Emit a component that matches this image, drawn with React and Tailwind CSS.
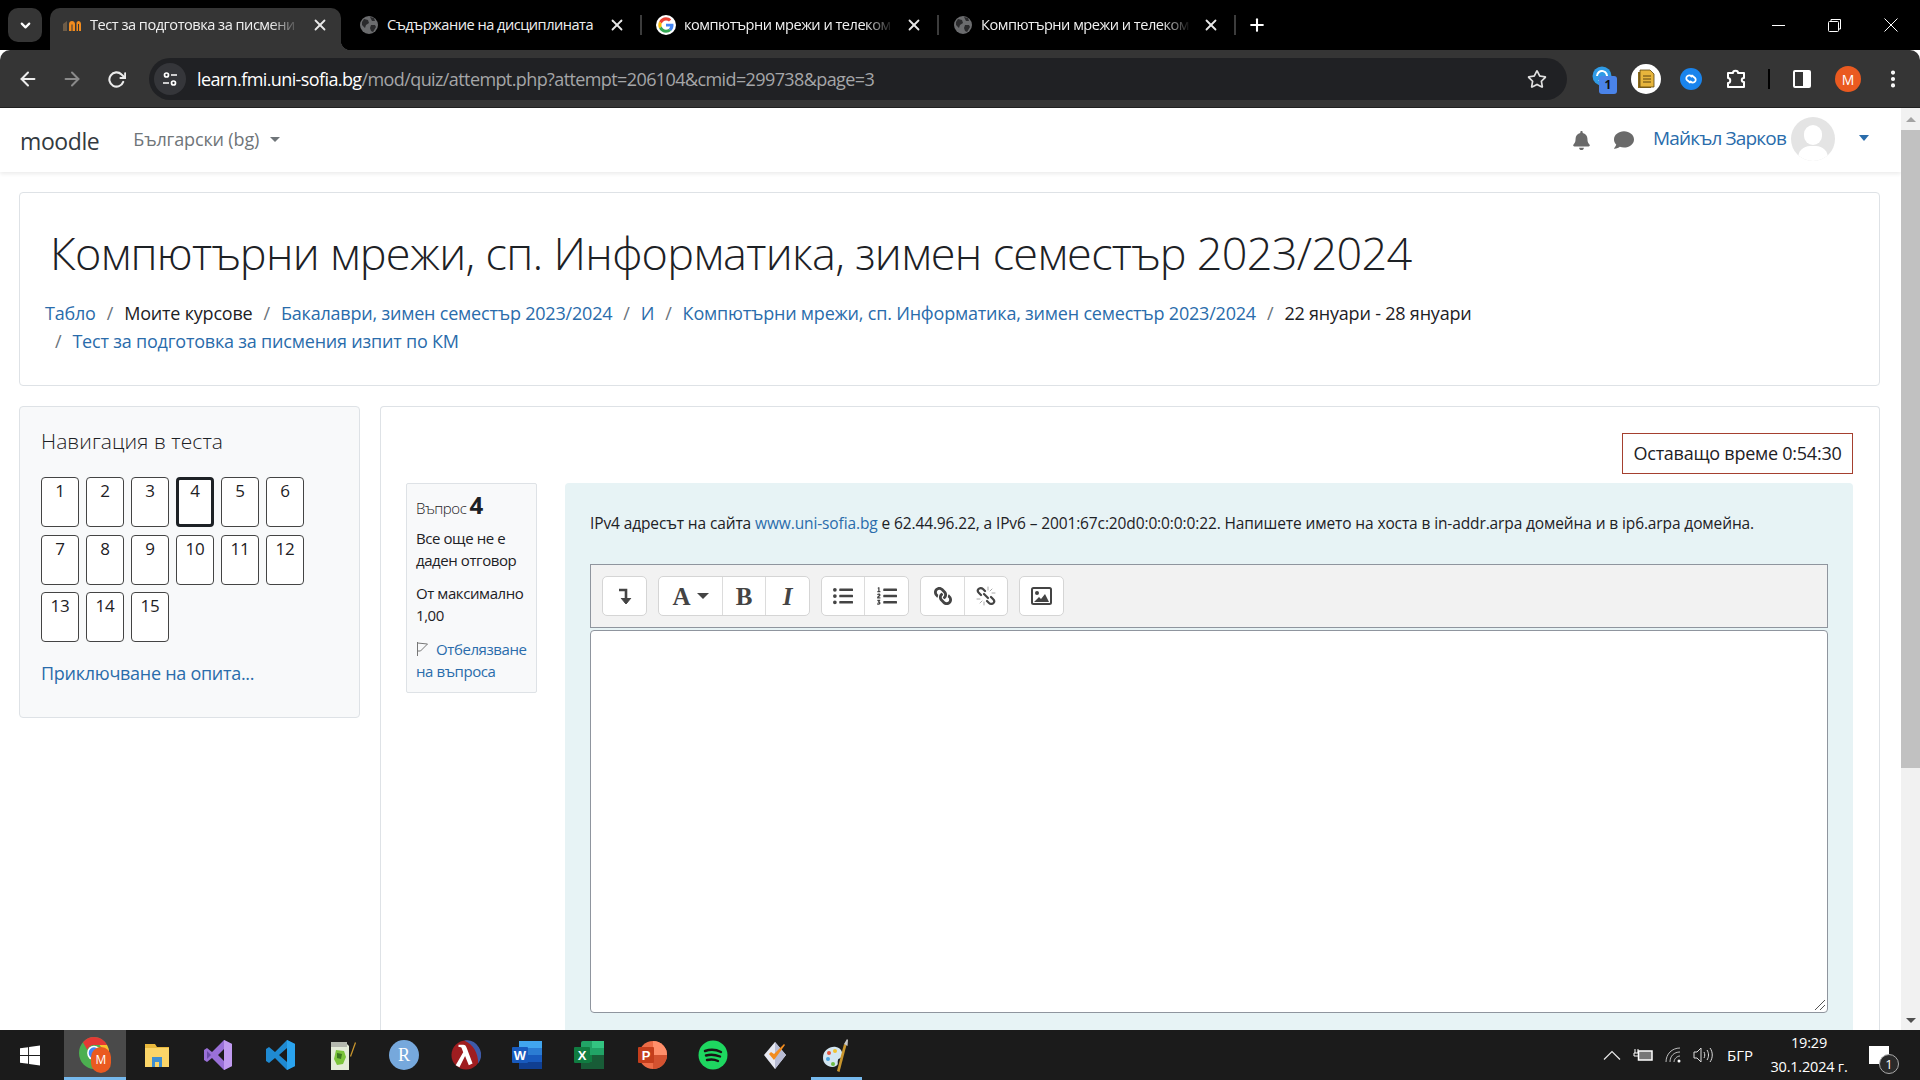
import React from "react";
import { FaListUl, FaListOl, FaLink, FaBell, FaComment, FaRegStar } from "react-icons/fa";
import { FiArrowLeft, FiArrowRight, FiRotateCw, FiX, FiPlus, FiChevronDown, FiMoreVertical } from "react-icons/fi";

const Globe = () => (
  <svg width="18" height="18" viewBox="0 0 18 18" className="shrink-0">
    <circle cx="9" cy="9" r="9" fill="#6b6c6e" />
    <path d="M4 3l4 1 1 3-3 2-1 3-3-3 0-3zM11 9l4 0 1 2-3 5-2-1-1-3z" fill="#2a2a2c" />
    <path d="M10 1l4 1 1 3-3 0z" fill="#2a2a2c" />
  </svg>
);

const GoogleG = () => (
  <svg width="20" height="20" viewBox="0 0 48 48" className="shrink-0">
    <circle cx="24" cy="24" r="24" fill="#fff" />
    <path fill="#ea4335" d="M24 13c3 0 5.300 1 7.200 2.800l5.300-5.300C33.300 7.400 29 5.500 24 5.500 16.800 5.500 10.500 9.700 7.500 15.800l6.200 4.800C15.100 16.200 19.200 13 24 13z" />
    <path fill="#4285f4" d="M42 24.500c0-1.300-.1-2.500-.3-3.700H24v7h10.100c-.4 2.300-1.800 4.300-3.800 5.600l6 4.700C39.800 34.700 42 30 42 24.500z" />
    <path fill="#fbbc05" d="M13.700 27.400c-.4-1.100-.6-2.200-.6-3.400s.2-2.300.6-3.400l-6.200-4.800C6.200 18.300 5.500 21 5.500 24s.7 5.700 2 8.200z" />
    <path fill="#34a853" d="M24 42.500c5 0 9.200-1.600 12.300-4.500l-6-4.700c-1.700 1.100-3.800 1.800-6.300 1.800-4.800 0-8.900-3.200-10.300-7.700l-6.200 4.800c3 6.200 9.300 10.300 16.500 10.300z" />
  </svg>
);

const MoodleFav = () => (
  <svg width="18" height="16" viewBox="0 0 18 16" className="shrink-0">
    <path d="M0 14V7l4-3v10z" fill="#6d5c48" />
    <path d="M6 14V7c0-2 1.500-3 3-3s3 1 3 3v7H9.500V7.500h-1V14z" fill="#f28c1e" />
    <path d="M13.500 14V6c0-1 1-2 2-2s2.500 1 2.500 3v7h-2V7h-1v7z" fill="#f28c1e" />
  </svg>
);

const ChromeLogo = () => (
  <div className="relative w-[32px] h-[36px]">
    <svg width="30" height="32" viewBox="0 0 48 48" preserveAspectRatio="none">
      <circle cx="24" cy="24" r="24" fill="#4caf50" />
      <path d="M24 0a24 24 0 0 1 20.800 12H24a12 12 0 0 0-10.800 7L6.300 8A24 24 0 0 1 24 0z" fill="#e53935" />
      <path d="M44.800 12A24 24 0 0 1 22 48l10-18a12 12 0 0 0 1-18z" fill="#fbc02d" />
      <circle cx="24" cy="24" r="11" fill="#fff" />
      <circle cx="24" cy="24" r="8.500" fill="#4285f4" />
    </svg>
    <span className="absolute right-0 bottom-0 w-[20px] h-[26px] rounded-full bg-[#ea5a20] text-white text-[12px] flex items-center justify-center leading-none">M</span>
  </div>
);

const TaskIcons = [
  <ChromeLogo key="c" />,
  <svg key="f" width="30" height="30" viewBox="0 0 30 30"><path d="M3 4h10l2 3h12v20H3z" fill="#e9b83c" /><rect x="3" y="8" width="24" height="19" fill="#fbd568" /><rect x="10" y="17" width="10" height="10" fill="#3f8fd2" /><rect x="13" y="22" width="4" height="5" fill="#fbd568" /></svg>,
  <svg key="v" width="30" height="32" viewBox="0 0 30 32"><path d="M21 1l8 4v22l-8 4-12-12-5 4-3-2V11l3-2 5 4zM21 10l-6 6 6 6z" fill="#9a70d8" /><path d="M21 1l8 4v22l-8 4z" fill="#c19bf0" /><path d="M4 12v8l4-4z" fill="#6a4ba8" /></svg>,
  <svg key="vs" width="32" height="32" viewBox="0 0 32 32"><path d="M23 1l8 4v22l-8 4-12-12-6 5-3-2V10l3-2 6 5zM23 9l-8 7 8 7z" fill="#1f8ad2" /><path d="M23 1l8 4v22l-8 4z" fill="#2aa3ee" /></svg>,
  <svg key="n" width="30" height="32" viewBox="0 0 30 32"><path d="M4 3h14l4 4v24H4z" fill="#e4ecd8" /><rect x="4" y="3" width="16" height="5" fill="#b4b8ae" /><path d="M9 11l8 1 2 6-3 7-6 1-3-6z" fill="#7cc53b" /><path d="M10 14l5 1-1 5-4-1z" fill="#3d7a1e" /><path d="M23 17L28 3l1 1-5 14z" fill="#c9962d" /></svg>,
  <svg key="r" width="32" height="32" viewBox="0 0 32 32"><circle cx="16" cy="16" r="15" fill="#76a8dc" /><text x="16" y="22" textAnchor="middle" fontFamily="'Liberation Serif',serif" fontSize="18" fill="#fff">R</text></svg>,
  <svg key="l" width="30" height="32" viewBox="0 0 32 32"><circle cx="16" cy="16" r="15.500" fill="#9f1d20" /><path d="M14 .6A15.500 15.500 0 0 1 29 25C29 14 24 5 14 .6z" fill="#3e5ba9" /><path d="M8 5h5c2 0 3 1 4 4l6 16-4 2-4-10-6 12-4-2 8-14-1.500-4C11 7.500 10 7.500 8 7.500z" fill="#fff" /></svg>,
  <svg key="w" width="32" height="32" viewBox="0 0 32 32"><rect x="8" y="2" width="23" height="28" rx="2" fill="#2b7cd3" /><rect x="8" y="2" width="23" height="7" fill="#41a5ee" /><rect x="8" y="16" width="23" height="7" fill="#185abd" /><rect x="8" y="23" width="23" height="7" fill="#103f91" /><rect x="1" y="8" width="16" height="16" rx="1" fill="#185abd" /><text x="9" y="21" textAnchor="middle" fontFamily="'Liberation Sans',sans-serif" fontWeight="700" fontSize="13" fill="#fff">W</text></svg>,
  <svg key="x" width="32" height="32" viewBox="0 0 32 32"><rect x="8" y="2" width="23" height="28" rx="2" fill="#21a366" /><rect x="19" y="2" width="12" height="7" fill="#33c481" /><rect x="8" y="16" width="11" height="7" fill="#107c41" /><rect x="19" y="16" width="12" height="7" fill="#185c37" /><rect x="8" y="23" width="23" height="7" fill="#185c37" /><rect x="1" y="8" width="16" height="16" rx="1" fill="#107c41" /><text x="9" y="21" textAnchor="middle" fontFamily="'Liberation Sans',sans-serif" fontWeight="700" fontSize="13" fill="#fff">X</text></svg>,
  <svg key="p" width="32" height="32" viewBox="0 0 32 32"><circle cx="18" cy="16" r="14" fill="#ed6c47" /><path d="M18 2a14 14 0 0 1 14 14H18z" fill="#ff8f6b" /><path d="M18 16h14a14 14 0 0 1-14 14z" fill="#d35230" /><rect x="3" y="8" width="16" height="16" rx="1" fill="#c43e1c" /><text x="11" y="21" textAnchor="middle" fontFamily="'Liberation Sans',sans-serif" fontWeight="700" fontSize="13" fill="#fff">P</text></svg>,
  <svg key="s" width="30" height="30" viewBox="0 0 30 30"><circle cx="15" cy="15" r="14.500" fill="#1ed760" /><path d="M7 11c6-2 11-1.500 16 1M8 15.500c5-1.500 9-1 14 1M9 20c4-1 8-.5 11 1" stroke="#191414" strokeWidth="2.400" fill="none" strokeLinecap="round" /></svg>,
  <svg key="t" width="30" height="32" viewBox="0 0 30 32"><path d="M15 3l11 13-11 14L4 16z" fill="#e7e9f2" /><path d="M15 3l11 13-11 14z" fill="#b8bcd4" /><path d="M9 15l5 6 11-15-1-1-10 10-3-2z" fill="#f28c1e" /></svg>,
  <svg key="pa" width="30" height="34" viewBox="0 0 30 34"><path d="M2 20c0-8 7-12 13-11 5 1 7 5 6 9-1 3-4 2-4 4-1 3 1 4-2 6-5 3-13-1-13-8z" fill="#d3e6f1" /><circle cx="8" cy="15" r="2" fill="#e5553f" /><circle cx="14" cy="13" r="2" fill="#f2c230" /><circle cx="7" cy="21" r="2" fill="#4aa3df" /><circle cx="12" cy="26" r="2" fill="#6dbb45" /><path d="M16 33l7-27 2.500 1-7 27z" fill="#c9962d" /><path d="M23 6l3-5 1 1-.5 6z" fill="#c9c9c9" /></svg>,
];

const Sep = () => <span className="w-[2px] h-[20px] bg-[#3c3c3c] shrink-0 mx-[2px] mb-[8px]" />;

function Tab({ icon, title, active, fade }) {
  return (
    <div className={`relative flex items-center h-[42px] pb-[8px] w-[291px] shrink-0 ${active ? "bg-[#353535] rounded-t-[10px]" : ""}`}>
      <div className="w-[40px] pl-[4px] flex justify-center shrink-0">{icon}</div>
      <span className={`w-[210px] overflow-hidden whitespace-nowrap text-[14.600px] tracking-[-0.5px] text-[#f0f0f0] ${fade ? "[mask-image:linear-gradient(90deg,#000_86%,transparent)]" : ""}`}>{title}</span>
      <FiX size={18} strokeWidth={2.4} className="ml-[11px] shrink-0 text-[#e8e8e8]" />
      {active && <span className="absolute bottom-0 -right-[10px] w-[10px] h-[10px] bg-[radial-gradient(circle_at_100%_0,transparent_10px,#353535_10.5px)]" />}
    </div>
  );
}

function ChromeBar() {
  return (
    <>
      <div className="h-[50px] bg-black flex items-end shrink-0 pl-[8px]">
        <div className="self-start mt-[8px] w-[34px] h-[34px] bg-[#353535] rounded-[10px] flex items-center justify-center mr-[8px] shrink-0">
          <FiChevronDown size={15} strokeWidth={3.5} className="text-white" />
        </div>
        <Tab active fade icon={<MoodleFav />} title="Тест за подготовка за писмени" />
        <div className="flex items-center h-[42px] ml-[6px]">
          <Tab icon={<Globe />} title="Съдържание на дисциплината" />
          <Sep />
          <Tab fade icon={<GoogleG />} title="компютърни мрежи и телеком" />
          <Sep />
          <Tab fade icon={<Globe />} title="Компютърни мрежи и телеком" />
          <Sep />
          <FiPlus size={20} strokeWidth={2.5} className="ml-[9px] mb-[8px] text-white shrink-0" />
        </div>
        <div className="ml-auto self-start h-[50px] flex items-center text-white">
          <div className="w-[56px] flex justify-center"><span className="w-[13px] h-[1px] bg-white" /></div>
          <div className="w-[56px] flex justify-center">
            <svg width="13" height="13" viewBox="0 0 13 13" fill="none" stroke="#fff"><rect x=".5" y="2.500" width="10" height="10" rx="1" /><path d="M3 2.500V.5h9.500V10h-2" /></svg>
          </div>
          <div className="w-[58px] flex justify-center">
            <svg width="14" height="14" viewBox="0 0 14 14" stroke="#fff"><path d="M.5.5l13 13M13.500.5l-13 13" /></svg>
          </div>
        </div>
      </div>
      <div className="h-[58px] pt-[1px] bg-[#353535] rounded-t-[10px] flex items-center shrink-0 border-b border-[#202020]">
        <FiArrowLeft size={22} strokeWidth={2.2} className="ml-[17px] text-[#ececec]" />
        <FiArrowRight size={22} strokeWidth={2.2} className="ml-[22px] text-[#8a8a8a]" />
        <FiRotateCw size={19} strokeWidth={2.6} className="ml-[24px] text-[#ececec]" />
        <div className="ml-[23px] h-[42px] w-[1418px] bg-[#202124] rounded-[21px] flex items-center pl-[5px] pr-[20px] shrink-0">
          <div className="w-[32px] h-[32px] rounded-full bg-[#35363a] flex items-center justify-center">
            <svg width="14" height="14" viewBox="0 0 14 14" fill="none" stroke="#fff" strokeWidth="1.700"><circle cx="3.500" cy="3" r="2" /><path d="M8 3h6M0 11h6" /><circle cx="10.500" cy="11" r="2" /></svg>
          </div>
          <span className="ml-[11px] text-[18px] tracking-[-0.6px] whitespace-nowrap text-white">learn.fmi.uni-sofia.bg<span className="text-[#a5a6a8]">/mod/quiz/attempt.php?attempt=206104&amp;cmid=299738&amp;page=3</span></span>
          <FaRegStar size={20} className="ml-auto text-[#e0e0e0]" />
        </div>
        <div className="ml-[24px] w-[30px] h-[30px] relative shrink-0">
          <svg width="20" height="20" viewBox="0 0 20 20" className="absolute left-[1px] top-[2px]"><circle cx="10" cy="10" r="9.500" fill="#2f9be6" /><path d="M5 10a5 5 0 1 1 2 4" stroke="#fff" strokeWidth="2" fill="none" /></svg>
          <span className="absolute left-[8px] top-[12px] w-[18px] h-[18px] bg-[#4a83e8] rounded-[3px] text-[12px] text-[#111] font-bold flex items-center justify-center">1</span>
        </div>
        <div className="ml-[10px] w-[30px] h-[30px] rounded-full bg-white flex items-center justify-center shrink-0">
          <svg width="18" height="20" viewBox="0 0 18 20"><rect x="1" y="3" width="13" height="16" fill="#8a6a1a" /><path d="M3 1h10l4 4v13H3z" fill="#e7b53c" stroke="#5c4510" strokeWidth=".8" /><path d="M6 7h8M6 10h8M6 13h8" stroke="#5c4510" /></svg>
        </div>
        <div className="ml-[19px] w-[22px] h-[22px] rounded-full bg-[#1a84ec] flex items-center justify-center shrink-0">
          <svg width="14" height="14" viewBox="0 0 14 14" fill="none" stroke="#fff" strokeWidth="1.800" strokeLinecap="round"><path d="M6 10.500L3 8c-1-1-1-3 .5-4s3-.5 4 .5M8 3.500L11 6c1 1 1 3-.5 4s-3 .5-4-.5" /></svg>
        </div>
        <svg width="22" height="22" viewBox="0 0 22 22" fill="none" stroke="#fff" strokeWidth="2" strokeLinejoin="round" className="ml-[23px] shrink-0"><path d="M3 5h5c0-3 5-3 5 0h6v5c-3 0-3 4 0 4v5H3v-4c3 0 3-5 0-5z" /></svg>
        <span className="ml-[21px] w-[2px] h-[20px] bg-black shrink-0" />
        <div className="ml-[23px] w-[18px] h-[18px] rounded-[2px] bg-white flex justify-start shrink-0 border-2 border-white"><span className="w-[8px] h-full bg-[#353535]" /></div>
        <div className="ml-[24px] w-[26px] h-[26px] rounded-full bg-[#ea5a20] text-white text-[14px] flex items-center justify-center shrink-0">M</div>
        <FiMoreVertical size={22} strokeWidth={2.5} className="ml-[21px] text-white shrink-0" />
      </div>
    </>
  );
}

const BLUE = "text-[#2a6cab]";
const Slash = ({ cls = "mx-[11px]" }) => <span className={`${cls} text-[#6a737b]`}>/</span>;

function Navbar() {
  return (
    <div className="h-[64px] bg-white flex items-center shrink-0 shadow-[0_2px_4px_rgba(0,0,0,0.08)] relative pl-[20px] text-[#1d2125]">
      <span className="text-[23px] tracking-[-0.4px] text-[#333a40] leading-none mt-[2px]">moodle</span>
      <span className="ml-[34px] text-[18px] tracking-[-0.15px] text-[#6f7579] -mt-[1px]">Български (bg)</span>
      <span className="ml-[11px] -mt-[2px] border-x-[5px] border-x-transparent border-t-[5px] border-t-[#6f7579]" />
      <FaBell size={19} className="ml-auto text-[#6a6a6a]" />
      <FaComment size={20} className="ml-[23px] text-[#6a6a6a]" />
      <span className={`ml-[19px] text-[19px] tracking-[-0.83px] ${BLUE} -mt-[4px]`}>Майкъл Зарков</span>
      <div className="ml-[5px] w-[44px] h-[44px] rounded-full bg-[#e4e4e4] overflow-hidden relative shrink-0 -mt-[2px]">
        <span className="absolute left-[13px] top-[8px] w-[18px] h-[20px] rounded-full bg-white" />
        <span className="absolute left-[7px] top-[29px] w-[30px] h-[24px] rounded-full bg-white" />
      </div>
      <span className="ml-[24px] mr-[32px] -mt-[5px] border-x-[5px] border-x-transparent border-t-[6px] border-t-[#2a6cab]" />
    </div>
  );
}

function Header() {
  return (
    <div className="mt-[20px] mx-[19px] w-[1861px] h-[194px] border border-[#dee2e6] rounded-[4px] bg-white pl-[25px] pt-[30px] shrink-0">
      <h1 className="ml-[5px] text-[45px] font-light leading-[60px] tracking-[-0.68px] text-[#1d2125] whitespace-nowrap">Компютърни мрежи, сп. Информатика, зимен семестър 2023/2024</h1>
      <div className="mt-[16px] text-[18px] leading-[28px] tracking-[-0.2px] whitespace-nowrap">
        <div>
          <span className={BLUE}>Табло</span><Slash />
          <span className="text-[#1d2125]">Моите курсове</span><Slash />
          <span className={BLUE}>Бакалаври, зимен семестър 2023/2024</span><Slash />
          <span className={BLUE}>И</span><Slash />
          <span className={BLUE}>Компютърни мрежи, сп. Информатика, зимен семестър 2023/2024</span><Slash />
          <span className="text-[#1d2125]">22 януари - 28 януари</span>
        </div>
        <div className="pl-[10px]">
          <Slash cls="mr-[11px]" /><span className={BLUE}>Тест за подготовка за писмения изпит по КМ</span>
        </div>
      </div>
    </div>
  );
}

function QuizNav() {
  const nums = Array.from({ length: 15 }, (_, i) => i + 1);
  return (
    <div className="w-[341px] h-[312px] bg-[#f8f9fa] border border-[#dee2e6] rounded-[4px] pl-[21px] pt-[18px] shrink-0">
      <div className="text-[21px] font-light leading-[32px] tracking-[0.05px] text-[#1d2125]">Навигация в теста</div>
      <div className="mt-[20px] grid grid-cols-[repeat(6,38px)] gap-x-[7px] gap-y-[7.5px]">
        {nums.map((n) => (
          <div key={n} className={`h-[50px] rounded-[4px] bg-white text-center text-[17px] tracking-[-0.3px] text-[#1d2125] ${n === 4 ? "border-[3px] border-[#1d2125] leading-[22px]" : "border border-[#444] leading-[26px]"}`}>{n}</div>
        ))}
      </div>
      <div className={`mt-[19px] text-[18px] leading-[24px] tracking-[-0.28px] ${BLUE}`}>Приключване на опита...</div>
    </div>
  );
}

function InfoBox() {
  return (
    <div className="w-[131px] h-[210px] bg-[#f8f9fa] border border-[#dee2e6] rounded-[2px] pl-[9px] pt-[10px] shrink-0 text-[15px] leading-[22px] tracking-[-0.42px] text-[#1d2125]">
      <div className="h-[28px] flex items-baseline">
        <span className="font-light">Въпрос</span><span className="ml-[3px] text-[24px] font-bold">4</span>
      </div>
      <div className="mt-[5px]">Все още не е<br />даден отговор</div>
      <div className="mt-[11px]">От максимално<br />1,00</div>
      <div className={`mt-[12px] ${BLUE}`}>
        <svg width="12" height="14" viewBox="0 0 12 14" className="inline mr-[8px] -mt-[3px]" fill="none" stroke="#777"><path d="M1.500 0v14M1.500 1l10 1-7 7-3 0" /></svg>
        Отбелязване<br />на въпроса
      </div>
    </div>
  );
}

const Btn = ({ w, children, last }) => (
  <div className={`h-full flex items-center justify-center text-[#444] ${last ? "" : "border-r border-[#dcdcdc]"}`} style={{ width: w }}>{children}</div>
);
const Group = ({ children }) => (
  <div className="h-[40px] flex bg-white border border-[#d5d5d5] rounded-[5px]">{children}</div>
);

function Editor() {
  const Letter = ({ c, i }) => <span className={`font-['Liberation_Serif',serif] font-bold text-[25px] leading-none text-[#444] ${i ? "italic" : ""}`}>{c}</span>;
  return (
    <div className="mt-[30px] mx-[25px] shrink-0">
      <div className="h-[64px] bg-[#f2f2f2] border border-[#8f959e] pl-[11px] flex items-center gap-[11px]">
        <Group>
          <Btn w={43} last>
            <svg width="14" height="17" viewBox="0 0 14 17" fill="none" stroke="#444" strokeWidth="2.600"><path d="M1 2h7v13" /><path d="M3 10l5 6 5-6" fill="#444" strokeWidth="1" /></svg>
          </Btn>
        </Group>
        <Group>
          <Btn w={64}><Letter c="A" /><span className="ml-[6px] border-x-[6px] border-x-transparent border-t-[6px] border-t-[#444]" /></Btn>
          <Btn w={43}><Letter c="B" /></Btn>
          <Btn w={43} last><Letter c="I" i /></Btn>
        </Group>
        <Group>
          <Btn w={43}><FaListUl size={20} /></Btn>
          <Btn w={43} last><FaListOl size={20} /></Btn>
        </Group>
        <Group>
          <Btn w={44}><FaLink size={18} className="-scale-x-100" /></Btn>
          <Btn w={42} last>
            <svg width="20" height="20" viewBox="0 0 20 20" fill="none" stroke="#444" strokeWidth="2.200" strokeLinecap="round"><path d="M9 5L7 3C5.500 1.500 3.500 2 2.500 3S1.500 5.500 3 7l2 2" /><path d="M11 15l2 2c1.500 1.500 3.500 1 4.500 0s1-2.500-.5-4l-2-2" /><path d="M8 8l4 4" /><path d="M12 1v3M16 3l-2 2M19 7h-3M1 13h3M4 17l2-2M8 19v-3" stroke="#aaa" strokeWidth="1" /></svg>
          </Btn>
        </Group>
        <Group>
          <Btn w={43} last>
            <svg width="21" height="18" viewBox="0 0 21 18"><rect x="1" y="1" width="19" height="16" rx="1.500" fill="#fff" stroke="#444" strokeWidth="2" /><circle cx="6" cy="6" r="2" fill="#444" /><path d="M3 15l5-5 2 2 4-5 4 8z" fill="#444" /></svg>
          </Btn>
        </Group>
      </div>
      <div className="mt-[2px] h-[383px] bg-white border border-[#8f959e] rounded-[4px] relative">
        <svg width="12" height="12" viewBox="0 0 12 12" className="absolute right-[1px] bottom-[1px]" stroke="#555" fill="none"><path d="M1 11L11 1M6 11l5-5" /></svg>
      </div>
    </div>
  );
}

function Question() {
  return (
    <div className="flex-1 min-h-0 bg-white border-x border-t border-[#dee2e6] rounded-t-[4px] w-[1500px]">
      <div className="flex justify-end pr-[26px] pt-[26px]">
        <div className="h-[41px] w-[231px] border border-[#a5402f] flex items-center justify-center text-[18px] tracking-[-0.25px] text-[#1d2125]">Оставащо време 0:54:30</div>
      </div>
      <div className="flex pl-[25px] pr-[26px] mt-[9px]">
        <InfoBox />
        <div className="ml-[28px] w-[1288px] h-[560px] bg-[#e7f3f5] rounded-t-[4px] shrink-0">
          <div className="pt-[29px] pl-[25px] text-[15.500px] leading-[22px] tracking-[-0.12px] text-[#1d2125] whitespace-nowrap">
            IPv4 адресът на сайта <span className={BLUE}>www.uni-sofia.bg</span> е 62.44.96.22, а IPv6 – 2001:67c:20d0:0:0:0:0:22. Напишете името на хоста в in-addr.arpa домейна и в ip6.arpa домейна.
          </div>
          <Editor />
        </div>
      </div>
    </div>
  );
}

function Scrollbar() {
  return (
    <div className="w-[19px] bg-[#f1f1f1] shrink-0 flex flex-col items-center">
      <span className="mt-[9px] border-x-[5px] border-x-transparent border-b-[5px] border-b-[#a3a3a3]" />
      <div className="mt-[8px] w-full h-[638px] bg-[#c1c1c1]" />
      <span className="mt-auto mb-[7px] border-x-[5px] border-x-transparent border-t-[5px] border-t-[#505050]" />
    </div>
  );
}

function Taskbar() {
  return (
    <div className="h-[50px] bg-[#1b1b1b] flex items-center shrink-0 text-white">
      <div className="w-[64px] pr-[4px] flex justify-center">
        <svg width="20" height="21" viewBox="0 0 21 21" fill="#fff"><path d="M0 3l8.500-1.200V10H0zM9.500 1.600L21 0v10H9.500zM0 11h8.500v8.200L0 18zM9.500 11H21v10L9.500 19.400z" /></svg>
      </div>
      {TaskIcons.map((ic, i) => (
        <div key={i} className={`w-[61.800px] h-[50px] relative flex items-center justify-center shrink-0 ${i === 0 ? "bg-[#4a4a4a]" : ""}`}>
          {ic}
          {i === 0 && <span className="absolute left-0 right-0 bottom-0 h-[3px] bg-[#76b9ed]" />}
          {i === 12 && <span className="absolute left-[5px] right-[5px] bottom-0 h-[3px] bg-[#76b9ed]" />}
        </div>
      ))}
      <div className="ml-auto flex items-center">
        <svg width="18" height="10" viewBox="0 0 18 10" fill="none" stroke="#e8e8e8" strokeWidth="1.200"><path d="M1 9.500L9 1.500l8 8" /></svg>
        <svg width="22" height="14" viewBox="0 0 22 14" className="ml-[10px]" fill="none" stroke="#fff"><path d="M4 1v4M7 1v4M3 5h5v3H3z" /><rect x="7.500" y="3" width="13.500" height="9" fill="#777" strokeWidth="1.500" /></svg>
        <svg width="17" height="16" viewBox="0 0 17 16" className="ml-[12px]" fill="none" stroke="#bdbdbd"><path d="M1 15C1 7 7 1 15 1M5 15C5 9 9 5 15 5M9 15c0-3 3-6 6-6" /><circle cx="14" cy="14" r="1.500" fill="#fff" stroke="none" /></svg>
        <svg width="20" height="16" viewBox="0 0 20 16" className="ml-[11px]" fill="none" stroke="#dcdcdc"><path d="M1 5h3l4-4v14l-4-4H1zM11 5c1 2 1 4 0 6M14 3c2 3 2 7 0 10M17 1c3 4 3 10 0 14" /></svg>
        <span className="ml-[14px] text-[15px]">БГР</span>
        <div className="ml-[17px] w-[78px] text-center text-[14.500px] leading-[24px] whitespace-nowrap tracking-[-0.2px] flex flex-col items-center">
          <span>19:29</span><span>30.1.2024 г.</span>
        </div>
        <div className="ml-[21px] mr-[31px] relative w-[20px] h-[18px] bg-white">
          <span className="absolute -right-[10px] top-[8px] w-[20px] h-[20px] rounded-full bg-[#2a2a2a] border border-[#aaa] text-[13px] flex items-center justify-center leading-none">1</span>
        </div>
      </div>
    </div>
  );
}

export default function App() {
  return (
    <div className="w-[1920px] h-[1080px] overflow-hidden flex flex-col font-['Open_Sans',sans-serif] bg-white">
      <ChromeBar />
      <div className="flex-1 min-h-0 flex">
        <div className="flex-1 min-w-0 flex flex-col overflow-hidden">
          <Navbar />
          <Header />
          <div className="flex-1 min-h-0 mt-[20px] mx-[19px] flex gap-[20px] items-start">
            <QuizNav />
            <div className="self-stretch flex flex-col"><Question /></div>
          </div>
        </div>
        <Scrollbar />
      </div>
      <Taskbar />
    </div>
  );
}
